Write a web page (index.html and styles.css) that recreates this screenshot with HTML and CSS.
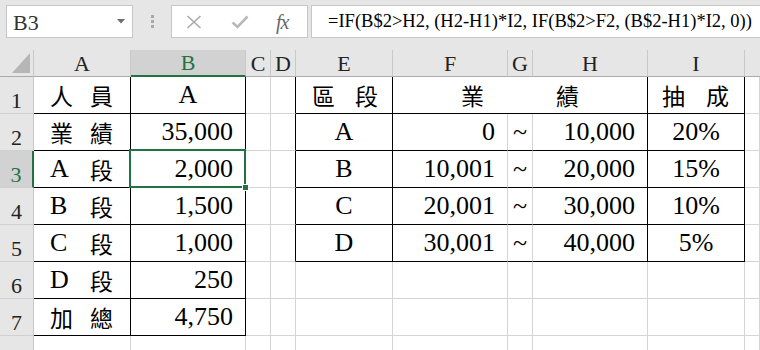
FILE: index.html
```html
<!DOCTYPE html>
<html>
<head>
<meta charset="utf-8">
<link rel="stylesheet" href="styles.css">
</head>
<body>
<div class="toolbar">
  <div class="namebox">
    <span class="nb-text">B3</span>
    <svg class="nb-arrow" width="8" height="5" viewBox="0 0 8 5"><polygon points="0,0 8,0 4,4.5" fill="#6e6e6e"/></svg>
  </div>
  <div class="dots"><i></i><i></i><i></i></div>
  <div class="fxbox">
    <svg class="ic-x" width="16" height="14" viewBox="0 0 16 14"><path d="M1.5 1 L14.5 13 M14.5 1 L1.5 13" stroke="#a9a9a9" stroke-width="1.6" fill="none"/></svg>
    <svg class="ic-check" width="18" height="14" viewBox="0 0 18 14"><path d="M1.5 7.5 L6.5 12 L16.5 1.5" stroke="#b9b9b9" stroke-width="2.6" fill="none"/></svg>
    <span class="fx">fx</span>
  </div>
  <div class="formula">=IF(B$2&gt;H2, (H2-H1)*I2, IF(B$2&gt;F2, (B$2-H1)*I2, 0))</div>
</div>

<div class="sheet">
  <div class="corner"><svg width="34" height="27" viewBox="0 0 34 27"><polygon points="30,3 30,23 12,23" fill="#b6b6b6"/></svg></div>
  <div class="ch">A</div>
  <div class="ch sel">B</div>
  <div class="ch">C</div>
  <div class="ch">D</div>
  <div class="ch">E</div>
  <div class="ch">F</div>
  <div class="ch">G</div>
  <div class="ch">H</div>
  <div class="ch">I</div>
  <div class="ch last"></div>

  <!-- row 1 -->
  <div class="rh">1</div>
  <div class="c b dist dA"><span class="cjk">人</span><span class="cjk">員</span></div>
  <div class="c b ctr">A</div>
  <div class="c"></div>
  <div class="c br"></div>
  <div class="c b dist dE"><span class="cjk">區</span><span class="cjk">段</span></div>
  <div class="c b dist dFH span3"><span class="cjk">業</span><span class="cjk">績</span></div>
  <div class="c b dist dI"><span class="cjk">抽</span><span class="cjk">成</span></div>
  <div class="c"></div>

  <!-- row 2 -->
  <div class="rh">2</div>
  <div class="c b dist dA"><span class="cjk">業</span><span class="cjk">績</span></div>
  <div class="c b num">35,000</div>
  <div class="c"></div>
  <div class="c br"></div>
  <div class="c b ctr">A</div>
  <div class="c bb num">0</div>
  <div class="c bb ctr">~</div>
  <div class="c b num">10,000</div>
  <div class="c b ctr">20%</div>
  <div class="c"></div>

  <!-- row 3 -->
  <div class="rh sel">3</div>
  <div class="c b dist dA"><span>A</span><span class="cjk">段</span></div>
  <div class="c b num">2,000</div>
  <div class="c"></div>
  <div class="c br"></div>
  <div class="c b ctr">B</div>
  <div class="c bb num">10,001</div>
  <div class="c bb ctr">~</div>
  <div class="c b num">20,000</div>
  <div class="c b ctr">15%</div>
  <div class="c"></div>

  <!-- row 4 -->
  <div class="rh">4</div>
  <div class="c b dist dA"><span>B</span><span class="cjk">段</span></div>
  <div class="c b num">1,500</div>
  <div class="c"></div>
  <div class="c br"></div>
  <div class="c b ctr">C</div>
  <div class="c bb num">20,001</div>
  <div class="c bb ctr">~</div>
  <div class="c b num">30,000</div>
  <div class="c b ctr">10%</div>
  <div class="c"></div>

  <!-- row 5 -->
  <div class="rh">5</div>
  <div class="c b dist dA"><span>C</span><span class="cjk">段</span></div>
  <div class="c b num">1,000</div>
  <div class="c"></div>
  <div class="c br"></div>
  <div class="c b ctr">D</div>
  <div class="c bb num">30,001</div>
  <div class="c bb ctr">~</div>
  <div class="c b num">40,000</div>
  <div class="c b ctr">5%</div>
  <div class="c"></div>

  <!-- row 6 -->
  <div class="rh">6</div>
  <div class="c b dist dA"><span>D</span><span class="cjk">段</span></div>
  <div class="c b num">250</div>
  <div class="c"></div>
  <div class="c"></div>
  <div class="c"></div>
  <div class="c"></div>
  <div class="c"></div>
  <div class="c"></div>
  <div class="c"></div>
  <div class="c"></div>

  <!-- row 7 -->
  <div class="rh">7</div>
  <div class="c b dist dA"><span class="cjk">加</span><span class="cjk">總</span></div>
  <div class="c b num">4,750</div>
  <div class="c"></div>
  <div class="c"></div>
  <div class="c"></div>
  <div class="c"></div>
  <div class="c"></div>
  <div class="c"></div>
  <div class="c"></div>
  <div class="c"></div>

  <!-- row 8 (label falls below the visible area) -->
  <div class="rh"></div>
  <div class="c"></div>
  <div class="c"></div>
  <div class="c"></div>
  <div class="c"></div>
  <div class="c"></div>
  <div class="c"></div>
  <div class="c"></div>
  <div class="c"></div>
  <div class="c"></div>
  <div class="c"></div>

  <div class="selection"></div>
  <div class="handle"></div>
</div>
</body>
</html>
```

FILE: styles.css
```css
* { box-sizing: border-box; }
html, body {
  margin: 0;
  padding: 0;
  width: 760px;
  height: 350px;
  overflow: hidden;
  background: #ffffff;
  font-family: "Liberation Serif", "Noto Sans CJK TC", serif;
}

/* ---------- formula bar ---------- */
.toolbar {
  display: flex;
  align-items: flex-start;
  height: 50px;
  padding: 5px 0 0 6px;
  background: #e6e6e6;
}
.namebox {
  position: relative;
  width: 127px;
  height: 33px;
  background: #fff;
  border: 1px solid #c6c6c6;
  display: flex;
  align-items: center;
  padding-left: 6px;
}
.nb-text {
  font-size: 22px;
  color: #333;
  line-height: 1;
  padding-top: 2px;
}
.nb-arrow {
  margin-left: auto;
  margin-right: 7px;
}
.dots {
  width: 38px;
  height: 33px;
  display: flex;
  flex-direction: column;
  align-items: center;
  justify-content: center;
  gap: 2px;
}
.dots i {
  display: block;
  width: 3px;
  height: 3px;
  background: #a9a9a9;
}
.fxbox {
  width: 137px;
  height: 33px;
  background: #fff;
  border: 1px solid #c6c6c6;
  display: flex;
  align-items: center;
  padding-left: 14px;
}
.ic-x { margin-right: 29px; }
.ic-check { margin-right: 27px; }
.fx {
  font-style: italic;
  font-size: 20px;
  color: #666;
  letter-spacing: -1px;
  line-height: 1;
}
.formula {
  flex: 1;
  margin-left: 3px;
  margin-right: -20px;
  height: 33px;
  background: #fff;
  border: 1px solid #c6c6c6;
  padding-left: 16px;
  font-size: 18.5px;
  line-height: 31px;
  color: #000;
  white-space: nowrap;
  overflow: hidden;
}

/* ---------- sheet ---------- */
.sheet {
  position: relative;
  display: grid;
  grid-template-columns: 34px 97px 115px 25px 25px 97px 115px 25px 115px 97px 1fr;
  grid-template-rows: 27px repeat(7, 37px) 15px;
  overflow: hidden;
}
.corner {
  background: #e6e6e6;
  border-right: 1px solid #c8c8c8;
  border-bottom: 1px solid #ababab;
}
.corner svg { display: block; }
.ch {
  background: #e6e6e6;
  border-right: 1px solid #c8c8c8;
  border-bottom: 1px solid #ababab;
  font-size: 22px;
  line-height: 24px;
  color: #222;
  display: flex;
  align-items: flex-end;
  justify-content: center;
}
.ch.last { border-right: none; }
.ch.sel {
  background: #d2d2d2;
  color: #217346;
  border-bottom: 2px solid #217346;
}
.rh {
  background: #e6e6e6;
  border-right: 1px solid #c8c8c8;
  border-bottom: 1px solid #d0d0d0;
  font-size: 22px;
  line-height: 24px;
  color: #222;
  display: flex;
  align-items: flex-end;
  justify-content: center;
}
.rh.sel {
  background: #d2d2d2;
  color: #217346;
  border-right: 2px solid #217346;
}

.c {
  border-right: 1px solid #d4d4d4;
  border-bottom: 1px solid #d4d4d4;
  font-size: 26px;
  line-height: 30px;
  color: #000;
  display: flex;
  align-items: flex-end;
  padding-bottom: 3px;
  white-space: nowrap;
}
.c.b { border-right-color: #000; border-bottom-color: #000; }
.c.br { border-right-color: #000; }
.c.bb { border-bottom-color: #000; }
.span3 { grid-column: span 3; }

.num { justify-content: flex-end; padding-right: 12px; }
.ctr { justify-content: center; }
.dist { justify-content: space-between; }
.dA { padding-left: 16px; padding-right: 17px; }
.dE { padding-left: 16px; padding-right: 14px; }
.dFH { padding-left: 68px; padding-right: 68px; }
.dI { padding-left: 14px; padding-right: 15px; }
.cjk {
  font-family: "Noto Sans CJK TC", "Liberation Serif", sans-serif;
  font-size: 23px;
  font-weight: 400;
}

.selection {
  position: absolute;
  left: 129px;
  top: 99px;
  width: 117px;
  height: 39px;
  border: 2px solid #217346;
  pointer-events: none;
}
.handle {
  position: absolute;
  left: 242px;
  top: 134px;
  width: 7px;
  height: 7px;
  background: #217346;
  border: 1px solid #fff;
}
```
